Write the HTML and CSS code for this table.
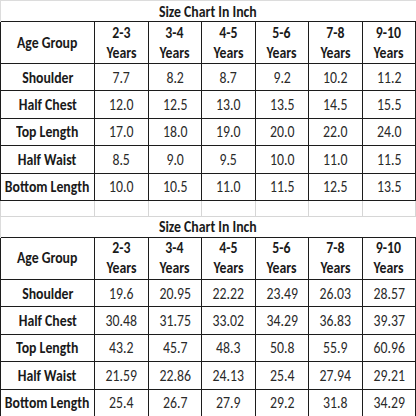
FILE: index.html
```html
<!DOCTYPE html>
<html>
<head>
    <meta charset="UTF-8">
    <title>Size Chart In Inch</title>
    <link rel="stylesheet" href="styles.css">
</head>
<body>
    <table class="sheet">
        <colgroup>
            <col class="col-label">
            <col class="col-size">
            <col class="col-size">
            <col class="col-size">
            <col class="col-size">
            <col class="col-size">
            <col class="col-size">
        </colgroup>
        <!-- first chart -->
        <tr class="title-row">
            <th colspan="7"><span class="fit">Size Chart In Inch</span></th>
        </tr>
        <tr class="head-row">
            <th><span class="fit">Age Group</span></th>
            <th><span class="fit">2-3<br>Years</span></th>
            <th><span class="fit">3-4<br>Years</span></th>
            <th><span class="fit">4-5<br>Years</span></th>
            <th><span class="fit">5-6<br>Years</span></th>
            <th><span class="fit">7-8<br>Years</span></th>
            <th><span class="fit">9-10<br>Years</span></th>
        </tr>
        <tr class="data-row">
            <th><span class="fit">Shoulder</span></th>
            <td><span class="fit">7.7</span></td>
            <td><span class="fit">8.2</span></td>
            <td><span class="fit">8.7</span></td>
            <td><span class="fit">9.2</span></td>
            <td><span class="fit">10.2</span></td>
            <td><span class="fit">11.2</span></td>
        </tr>
        <tr class="data-row">
            <th><span class="fit">Half Chest</span></th>
            <td><span class="fit">12.0</span></td>
            <td><span class="fit">12.5</span></td>
            <td><span class="fit">13.0</span></td>
            <td><span class="fit">13.5</span></td>
            <td><span class="fit">14.5</span></td>
            <td><span class="fit">15.5</span></td>
        </tr>
        <tr class="data-row">
            <th><span class="fit">Top Length</span></th>
            <td><span class="fit">17.0</span></td>
            <td><span class="fit">18.0</span></td>
            <td><span class="fit">19.0</span></td>
            <td><span class="fit">20.0</span></td>
            <td><span class="fit">22.0</span></td>
            <td><span class="fit">24.0</span></td>
        </tr>
        <tr class="data-row">
            <th><span class="fit">Half Waist</span></th>
            <td><span class="fit">8.5</span></td>
            <td><span class="fit">9.0</span></td>
            <td><span class="fit">9.5</span></td>
            <td><span class="fit">10.0</span></td>
            <td><span class="fit">11.0</span></td>
            <td><span class="fit">11.5</span></td>
        </tr>
        <tr class="data-row">
            <th><span class="fit">Bottom Length</span></th>
            <td><span class="fit">10.0</span></td>
            <td><span class="fit">10.5</span></td>
            <td><span class="fit">11.0</span></td>
            <td><span class="fit">11.5</span></td>
            <td><span class="fit">12.5</span></td>
            <td><span class="fit">13.5</span></td>
        </tr>
        <!-- empty spreadsheet row between charts -->
        <tr class="gap-row">
            <td></td><td></td><td></td><td></td><td></td><td></td><td></td>
        </tr>
        <!-- second chart -->
        <tr class="title-row">
            <th colspan="7"><span class="fit">Size Chart In Inch</span></th>
        </tr>
        <tr class="head-row">
            <th><span class="fit">Age Group</span></th>
            <th><span class="fit">2-3<br>Years</span></th>
            <th><span class="fit">3-4<br>Years</span></th>
            <th><span class="fit">4-5<br>Years</span></th>
            <th><span class="fit">5-6<br>Years</span></th>
            <th><span class="fit">7-8<br>Years</span></th>
            <th><span class="fit">9-10<br>Years</span></th>
        </tr>
        <tr class="data-row">
            <th><span class="fit">Shoulder</span></th>
            <td><span class="fit">19.6</span></td>
            <td><span class="fit">20.95</span></td>
            <td><span class="fit">22.22</span></td>
            <td><span class="fit">23.49</span></td>
            <td><span class="fit">26.03</span></td>
            <td><span class="fit">28.57</span></td>
        </tr>
        <tr class="data-row">
            <th><span class="fit">Half Chest</span></th>
            <td><span class="fit">30.48</span></td>
            <td><span class="fit">31.75</span></td>
            <td><span class="fit">33.02</span></td>
            <td><span class="fit">34.29</span></td>
            <td><span class="fit">36.83</span></td>
            <td><span class="fit">39.37</span></td>
        </tr>
        <tr class="data-row">
            <th><span class="fit">Top Length</span></th>
            <td><span class="fit">43.2</span></td>
            <td><span class="fit">45.7</span></td>
            <td><span class="fit">48.3</span></td>
            <td><span class="fit">50.8</span></td>
            <td><span class="fit">55.9</span></td>
            <td><span class="fit">60.96</span></td>
        </tr>
        <tr class="data-row">
            <th><span class="fit">Half Waist</span></th>
            <td><span class="fit">21.59</span></td>
            <td><span class="fit">22.86</span></td>
            <td><span class="fit">24.13</span></td>
            <td><span class="fit">25.4</span></td>
            <td><span class="fit">27.94</span></td>
            <td><span class="fit">29.21</span></td>
        </tr>
        <tr class="data-row">
            <th><span class="fit">Bottom Length</span></th>
            <td><span class="fit">25.4</span></td>
            <td><span class="fit">26.7</span></td>
            <td><span class="fit">27.9</span></td>
            <td><span class="fit">29.2</span></td>
            <td><span class="fit">31.8</span></td>
            <td><span class="fit">34.29</span></td>
        </tr>
    </table>
</body>
</html>
```

FILE: styles.css
```css
body {
    margin: 0;
    background-color: #FFFFFF;
    font-family: Calibri, Carlito, Lato, "Liberation Sans", sans-serif;
    color: #1a1a1a;
}
.sheet {
    border-collapse: collapse;
    table-layout: fixed;
    width: 416px;
    font-size: 16px;
}
.col-label {
    width: 94px;
}
th, td {
    padding: 0;
    text-align: center;
    vertical-align: middle;
    border: 1.5px solid #1c1c1c;
    white-space: nowrap;
}
th {
    font-weight: bold;
}
td {
    font-weight: normal;
    color: #2a2a2a;
}
/* the capture is squeezed sideways: tall, narrow glyphs */
.fit {
    display: inline-block;
    margin: 0 -8px;
    transform: scaleX(0.86);
}
.title-row th {
    height: 20px;
    border: none;
    border-left: 1px solid #dcdcdc;
    border-top: 1px solid #dcdcdc;
}
.head-row th {
    height: 41px;
    line-height: 20px;
}
.data-row th,
.data-row td {
    height: 26.4px;
}
.gap-row td {
    height: 15px;
    border: 1px solid #d6d6d6;
}
```
